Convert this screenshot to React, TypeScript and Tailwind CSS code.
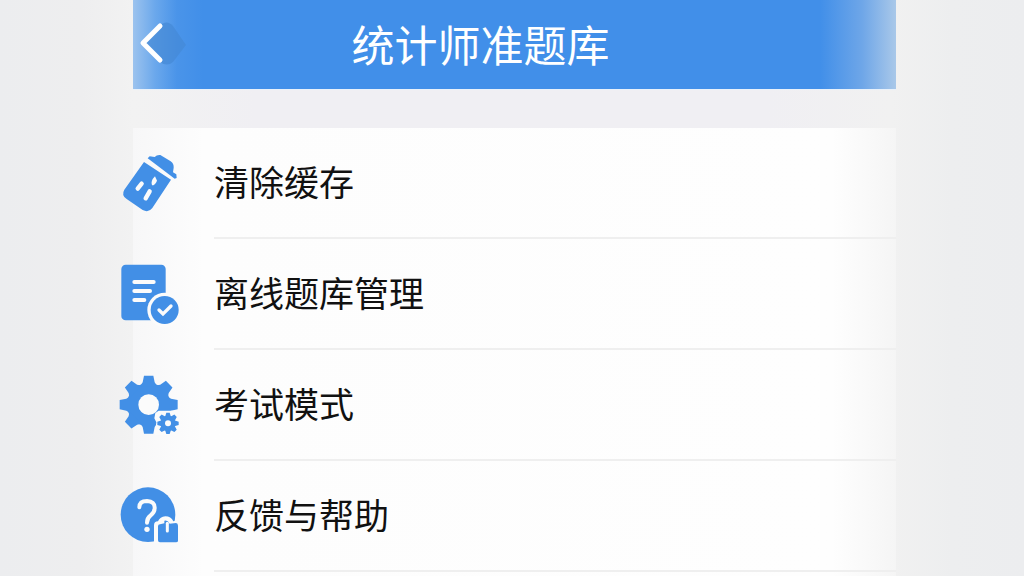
import React from 'react';

const ANGLES = [0, 45, 90, 135, 180, 225, 270, 315];

function BatteryIcon() {
  return (
    <svg viewBox="30 25 180 180" className="w-15 h-15 overflow-visible" fill="#428fe6" aria-hidden="true">
      <path d="M102 55 L183 108 L127 193 Q116 208 98 199 L50 166 Q33 155 43 138 Z" />
      <path d="M113 44 L119 38 L134 40 Q140 33 151 34 L182 53 Q192 60 191 72 L189 86 L199 92 L200 103 L194 105 Z" />
      <g stroke="#fbfbfb" strokeWidth="13" strokeLinecap="round">
        <path d="M95 120 L83 135" />
        <path d="M119 143 L107 164" />
      </g>
      <path d="M135 98 L141 111 Q135 125 126 125 Q121 112 135 98 Z" fill="#fbfbfb" />
    </svg>
  );
}

function OfflineIcon() {
  return (
    <svg viewBox="30 25 180 180" className="w-15 h-15 overflow-visible" aria-hidden="true">
      <rect x="34" y="30" width="133" height="167" rx="13" fill="#428fe6" />
      <g stroke="#fbfbfb" strokeWidth="12" strokeLinecap="round">
        <path d="M73 82 H131" />
        <path d="M73 109 H120" />
        <path d="M73 136 H103" />
      </g>
      <circle cx="164" cy="166" r="52" fill="#fbfbfb" />
      <circle cx="164" cy="166" r="42" fill="#428fe6" />
      <path d="M147 166 L159 178 L183 154" fill="none" stroke="#fbfbfb" strokeWidth="10" strokeLinecap="round" />
    </svg>
  );
}

function GearIcon() {
  return (
    <svg viewBox="30 25 180 180" className="w-15 h-15 overflow-visible" fill="#428fe6" aria-hidden="true">
      <circle cx="116" cy="117" r="65" />
      {ANGLES.map(a => (
        <path key={a} d="M90 62 L98 50 L102 30 H130 L134 50 L142 62 Z" transform={`rotate(${a} 116 117)`} />
      ))}
      <circle cx="116" cy="117" r="31" fill="#fbfbfb" />
      <path d="M136 142 L146 135 L206 135 V208 H134 L139 170 L133 158 Z" fill="#fbfbfb" />
      <circle cx="174" cy="173" r="23" />
      {ANGLES.map(a => (
        <path key={a} d="M165 154 L169 141 H179 L183 154 Z" transform={`rotate(${a} 174 173)`} />
      ))}
      <circle cx="174" cy="173" r="9" fill="#fbfbfb" />
    </svg>
  );
}

function HelpIcon() {
  return (
    <svg viewBox="30 22 180 180" className="w-15 h-15 overflow-visible" aria-hidden="true">
      <circle cx="114" cy="111" r="82" fill="#428fe6" />
      <path d="M88 89 Q88 70 111 70 Q135 71 134 91 Q134 104 122 113 Q111 121 111 135" fill="none" stroke="#fbfbfb" strokeWidth="12" strokeLinecap="round" />
      <circle cx="111" cy="155" r="8" fill="#fbfbfb" />
      <path d="M132 196 V143 Q132 131 144 131 Q150 118 166 116 Q183 116 190 131 L206 128 V196 Z" fill="#fbfbfb" />
      <path d="M144 146 Q144 140 150 140 L163 137 L163 129 Q173 126 179 138 L198 136 Q204 137 204 144 V189 Q204 194 198 194 H150 Q144 194 144 188 Z" fill="#428fe6" />
      <path d="M172 137 V160" stroke="#fbfbfb" strokeWidth="9" strokeLinecap="round" />
    </svg>
  );
}

const MENU_ITEMS = [
  { label: '清除缓存', icon: <BatteryIcon /> },
  { label: '离线题库管理', icon: <OfflineIcon /> },
  { label: '考试模式', icon: <GearIcon /> },
  { label: '反馈与帮助', icon: <HelpIcon /> },
];

export default function App() {
  return (
    <div className="min-h-screen flex flex-col pl-[13%] pr-[12.5%] bg-[linear-gradient(to_right,#ecedef_0,#eeeeef_8%,#f2f2f2_13%,#f0eff3_25%,#f0eff3_75%,#f1f1f1_87%,#edeeef_93%,#ecedef_100%)] font-['Noto_Sans_CJK_SC',sans-serif]">
      <header className="flex items-center h-[90px] border-b border-[#e8f1fb] bg-[linear-gradient(to_right,#9cc3ee_0,#6ba8ec_22px,#4a94e9_44px,#418fe9_70px,#418fe9_calc(100%-76px),#6ea6e8_calc(100%-34px),#a9c8e9_100%)]">
        <button type="button" aria-label="返回" className="w-14 h-full shrink-0">
          <svg viewBox="0 0 56 90" className="w-14 h-[90px]" aria-hidden="true">
            <path d="M26 26 Q34 19 40 26 L53 45 L40 62 Q34 67 27 62 L11 44 Z" fill="#4589d6" opacity="0.7" />
            <path d="M27 26 L10 43 L27 60" fill="none" stroke="#fff" strokeWidth="5" strokeLinecap="round" strokeLinejoin="round" />
          </svg>
        </button>
        <h1 className="flex-1 pr-[124px] pb-1 text-center text-[43px] leading-[60px] text-white whitespace-nowrap">统计师准题库</h1>
      </header>

      <ul className="flex-1 mt-[38px] bg-[linear-gradient(to_right,#f7f7f8_0,#fdfdfd_70px,#fefefe_calc(100%-64px),#f5f5f5_100%)]">
        {MENU_ITEMS.map(item => (
          <li key={item.label}>
            <button type="button" className="flex items-center gap-[34px] w-full text-left">
              <span className="-ml-[13px] pb-1 shrink-0">{item.icon}</span>
              <span className="flex-1 flex items-center h-[111px] pb-1 border-b-2 border-[#efefef] text-[35px] leading-[48px] text-[#111111]">
                {item.label}
              </span>
            </button>
          </li>
        ))}
      </ul>
    </div>
  );
}
